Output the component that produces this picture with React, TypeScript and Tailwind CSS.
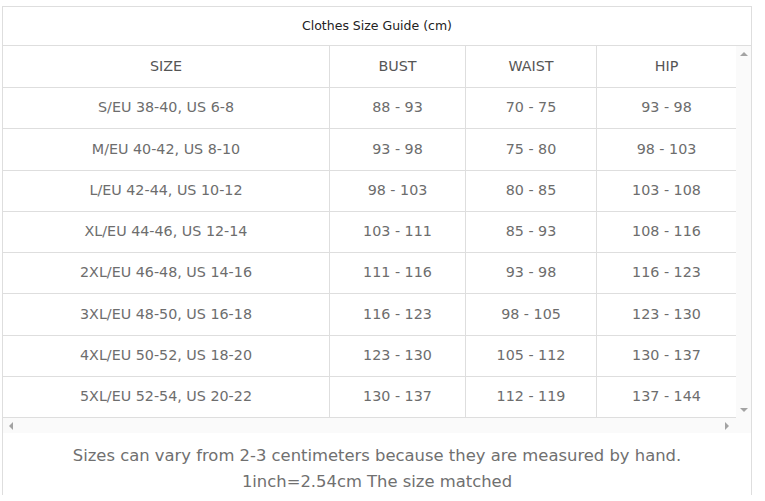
const rows = [
  ["S/EU 38-40, US 6-8", "88 - 93", "70 - 75", "93 - 98"],
  ["M/EU 40-42, US 8-10", "93 - 98", "75 - 80", "98 - 103"],
  ["L/EU 42-44, US 10-12", "98 - 103", "80 - 85", "103 - 108"],
  ["XL/EU 44-46, US 12-14", "103 - 111", "85 - 93", "108 - 116"],
  ["2XL/EU 46-48, US 14-16", "111 - 116", "93 - 98", "116 - 123"],
  ["3XL/EU 48-50, US 16-18", "116 - 123", "98 - 105", "123 - 130"],
  ["4XL/EU 50-52, US 18-20", "123 - 130", "105 - 112", "130 - 137"],
  ["5XL/EU 52-54, US 20-22", "130 - 137", "112 - 119", "137 - 144"],
];

const cols = ["w-[327px]", "w-[136px]", "w-[131px]", "w-[139px]"];

function Cell({ i, children, head }: { i: number; children: React.ReactNode; head?: boolean }) {
  return (
    <div
      className={`${cols[i]} flex items-center justify-center ${i < 3 ? "border-r border-[#dedede]" : ""} ${
        head ? "text-[14.3px] text-[#555]" : "text-[14.3px] text-[#6d6d6d]"
      }`}
    >
      {children}
    </div>
  );
}

export default function App() {
  return (
    <div className="bg-white w-[765px] h-[501px] pt-[6px] pl-[2px] font-['DejaVu_Sans',sans-serif]">
      <div className="w-[750px] border-l border-t border-r border-[#dedede]">
        <div className="h-[39px] flex items-center justify-center text-[12.5px] font-medium text-[#222] border-b border-[#dedede]">
          Clothes Size Guide (cm)
        </div>

        <div className="flex">
          <div className="w-[733px]">
            <div className="flex h-[42px] border-b border-[#dedede]">
              <Cell i={0} head>SIZE</Cell>
              <Cell i={1} head>BUST</Cell>
              <Cell i={2} head>WAIST</Cell>
              <Cell i={3} head>HIP</Cell>
            </div>
            {rows.map((r, k) => (
              <div key={k} className="flex h-[41.25px] border-b border-[#dedede]">
                {r.map((c, i) => (
                  <Cell key={i} i={i}>{c}</Cell>
                ))}
              </div>
            ))}
          </div>
          <div className="w-[15px] bg-[#fafafa] flex flex-col justify-between items-center py-[6px]">
            <div className="w-0 h-0 border-l-[4px] border-r-[4px] border-b-[4px] border-l-transparent border-r-transparent border-b-[#a3a3a3]" />
            <div className="w-0 h-0 border-l-[4px] border-r-[4px] border-t-[4px] border-l-transparent border-r-transparent border-t-[#a3a3a3]" />
          </div>
        </div>

        <div className="h-[15px] bg-[#fafafa] flex items-center justify-between pl-[6px] pr-[22px]">
          <div className="w-0 h-0 border-t-[4px] border-b-[4px] border-r-[4px] border-t-transparent border-b-transparent border-r-[#a3a3a3]" />
          <div className="w-0 h-0 border-t-[4px] border-b-[4px] border-l-[4px] border-t-transparent border-b-transparent border-l-[#a3a3a3]" />
        </div>

        <div className="pt-[10px] text-center text-[16.4px] leading-[26px] text-[#707070]">
          <p>Sizes can vary from 2-3 centimeters because they are measured by hand.</p>
          <p>1inch=2.54cm The size matched</p>
        </div>
      </div>
    </div>
  );
}
